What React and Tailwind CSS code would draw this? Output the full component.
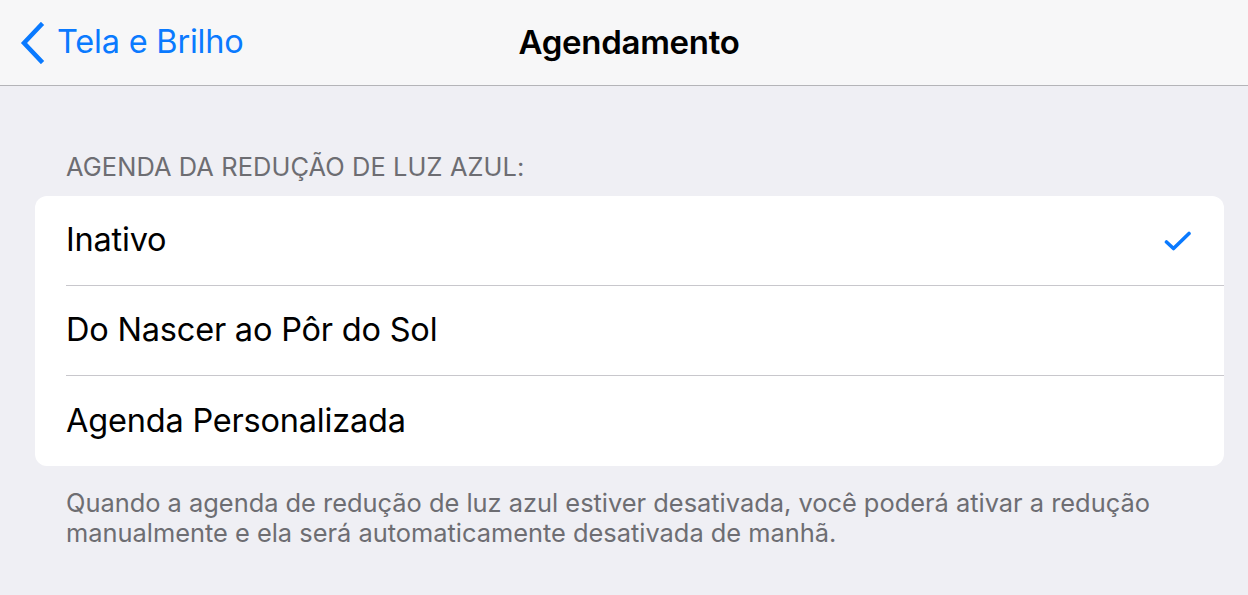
const ROWS = [
  { label: "Inativo", checked: true },
  { label: "Do Nascer ao Pôr do Sol" },
  { label: "Agenda Personalizada" },
];

function Chevron() {
  return (
    <svg width="26" height="42" viewBox="0 0 26 42" fill="none">
      <path d="M22 3 L5 21 L22 39" stroke="#0a7aff" strokeWidth="4.5" strokeLinecap="square" />
    </svg>
  );
}

function Check() {
  return (
    <svg width="28" height="22" viewBox="0 0 28 22" fill="none">
      <path d="M2.5 12 L9.5 18.5 L25 3.5" stroke="#0a7aff" strokeWidth="3.6" strokeLinecap="round" strokeLinejoin="round" />
    </svg>
  );
}

export default function App() {
  return (
    <div
      className="w-[1248px] h-[595px] bg-[#efeff4] overflow-hidden antialiased"
      style={{ fontFamily: "Inter, 'Noto Sans', sans-serif" }}
    >
      {/* Nav bar */}
      <div className="relative h-[86px] bg-[#f7f7f8] border-b border-[#b4b4b8] flex items-center">
        <div className="flex items-center pl-[19px] gap-[12px] text-[#0a7aff] text-[32.5px] tracking-[-0.2px]">
          <Chevron />
          <span>Tela e Brilho</span>
        </div>
        <div className="absolute left-0 right-0 top-0 h-[85px] flex items-center justify-center pl-[10px] text-[33px] font-semibold text-black tracking-[-0.3px]">
          Agendamento
        </div>
      </div>

      {/* Section header */}
      <div className="pl-[66px] pt-[66px] pb-[14px] text-[25.4px] leading-[30px] text-[#6d6d72] tracking-[0.1px] whitespace-nowrap">
        AGENDA DA REDUÇÃO DE LUZ AZUL:
      </div>

      {/* Options */}
      <div className="mx-[35px] w-[1189px] bg-white rounded-[12px] overflow-hidden">
        {ROWS.map((r, i) => (
          <div key={r.label} className="pl-[31px]">
            <div
              className={`h-[90px] flex items-center justify-between pr-[32px] ${
                i < ROWS.length - 1 ? "border-b border-[#c8c7cc]" : ""
              }`}
            >
              <span className="text-[32.5px] text-black tracking-[-0.2px]">{r.label}</span>
              {r.checked && <Check />}
            </div>
          </div>
        ))}
      </div>

      {/* Footer note */}
      <div className="pl-[66px] pt-[22px] text-[25.4px] leading-[30px] text-[#6d6d72] whitespace-nowrap">
        Quando a agenda de redução de luz azul estiver desativada, você poderá ativar a redução
        <br />
        manualmente e ela será automaticamente desativada de manhã.
      </div>
    </div>
  );
}
